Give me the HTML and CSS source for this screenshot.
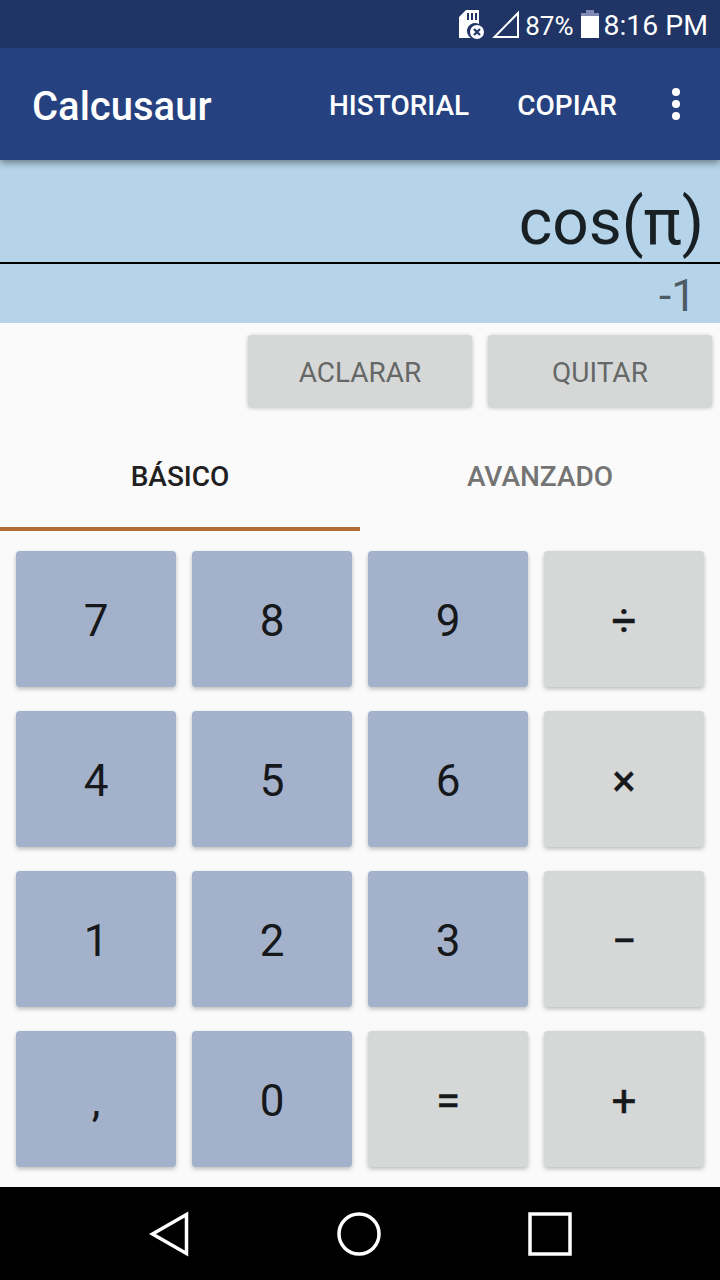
FILE: index.html
```html
<!DOCTYPE html>
<html lang="es">
<head>
    <meta charset="UTF-8">
    <meta name="viewport" content="width=device-width, initial-scale=1.0">
    <title>Calcusaur</title>
    <link rel="stylesheet" href="styles.css">
</head>
<body>
    <div class="status-bar">
        <svg class="sd-icon" width="26" height="30" viewBox="0 0 26 30">
            <path fill="#fff" d="M7 0H20V14A8 8 0 0 0 12 28H0V7Z"/>
            <path fill="none" stroke="#203565" stroke-width="2" d="M9 3V10M13 3V10M17 3V10"/>
            <circle cx="18" cy="22" r="7" fill="#fff"/>
            <path fill="none" stroke="#203565" stroke-width="2.2" d="M15 19L21 25M21 19L15 25"/>
        </svg>
        <svg class="signal-icon" width="28" height="28" viewBox="0 0 28 28">
            <path fill="none" stroke="#fff" stroke-width="2" d="M2.5 27H26V3Z"/>
        </svg>
        <span class="battery-level">87%</span>
        <svg class="battery-icon" width="18" height="28" viewBox="0 0 18 28">
            <path fill="#8189b3" d="M5 0H13V3H18V6H0V3H5Z"/>
            <path fill="#fff" d="M0 6H18V28H0Z"/>
        </svg>
        <span class="clock">8:16 PM</span>
    </div>

    <header>
        <h1>Calcusaur</h1>
        <button class="menu-item">HISTORIAL</button>
        <button class="menu-item">COPIAR</button>
        <button class="overflow" aria-label="Más opciones">
            <svg width="8" height="32" viewBox="0 0 8 32">
                <g fill="#fff">
                    <circle cx="4" cy="4" r="4"/>
                    <circle cx="4" cy="16" r="4"/>
                    <circle cx="4" cy="28" r="4"/>
                </g>
            </svg>
        </button>
    </header>

    <div class="display">
        <div class="expression">cos(π)</div>
        <div class="result">-1</div>
    </div>

    <div class="edit-buttons">
        <button>ACLARAR</button>
        <button>QUITAR</button>
    </div>

    <div class="tabs">
        <button class="tab active">BÁSICO</button>
        <button class="tab">AVANZADO</button>
    </div>

    <div class="keypad">
        <button class="key">7</button>
        <button class="key">8</button>
        <button class="key">9</button>
        <button class="key operator">÷</button>

        <button class="key">4</button>
        <button class="key">5</button>
        <button class="key">6</button>
        <button class="key operator">×</button>

        <button class="key">1</button>
        <button class="key">2</button>
        <button class="key">3</button>
        <button class="key operator">−</button>

        <button class="key">,</button>
        <button class="key">0</button>
        <button class="key operator">=</button>
        <button class="key operator">+</button>
    </div>

    <!-- Android navigation buttons -->
    <nav>
        <svg width="46" height="46" viewBox="0 0 46 46">
            <path d="M7.5 23L41.5 3.5V42.5Z"/>
        </svg>
        <svg width="46" height="46" viewBox="0 0 46 46">
            <circle cx="23" cy="23" r="20"/>
        </svg>
        <svg width="46" height="46" viewBox="0 0 46 46">
            <rect x="3" y="3" width="40" height="40"/>
        </svg>
    </nav>
</body>
</html>
```

FILE: styles.css
```css
* {
    box-sizing: border-box;
}

body {
    display: flex;
    flex-direction: column;
    height: 1280px;
    margin: 0;
    font-family: Roboto, sans-serif;
    background-color: #fafafa;
    color: #1d1f1f;
    overflow: hidden;
}

button {
    padding: 0;
    border: none;
    background: none;
    font-family: inherit;
    color: inherit;
    cursor: pointer;
}

svg {
    display: block;
    flex: none;
}

.status-bar {
    display: flex;
    align-items: center;
    justify-content: flex-end;
    height: 48px;
    padding-right: 12px;
    background-color: #203565;
    color: white;
    z-index: 2;
}

.sd-icon {
    margin: 1px 7px 0 0;
}

.signal-icon {
    margin-right: 5px;
}

.battery-level {
    padding-top: 3px;
    font-size: 26px;
    line-height: 50px;
}

.battery-icon {
    margin: 0 5px 0 7px;
}

.clock {
    padding-top: 4px;
    font-size: 28.4px;
    line-height: 50px;
}

header {
    display: flex;
    align-items: center;
    height: 112px;
    padding: 0 40px 0 32px;
    background-color: #25417f;
    color: white;
    box-shadow: 0 3px 7px rgba(0, 0, 0, 0.4);
    z-index: 1;
}

h1 {
    flex: 1;
    margin: 4px 0 0;
    font-size: 40px;
    font-weight: 500;
}

.menu-item {
    margin-top: 2px;
    margin-right: 48px;
    font-size: 28px;
    font-weight: 500;
}

.overflow {
    margin-left: 7px;
}

.display {
    height: 163px;
    background-color: #b5d4e9;
    text-align: right;
}

.expression {
    height: 104px;
    padding: 25px 16px 0 0;
    border-bottom: 2px solid black;
    font-size: 64px;
    line-height: 75px;
    color: #182024;
}

.result {
    padding-right: 24px;
    font-size: 44px;
    line-height: 64px;
    color: #4c5a63;
}

.edit-buttons {
    display: flex;
    justify-content: flex-end;
    gap: 16px;
    padding: 12px 8px 14px;
}

.edit-buttons button {
    width: 224px;
    height: 72px;
    padding-top: 2px;
    border-radius: 4px;
    background-color: #d6d8d7;
    box-shadow: 0 1px 4px rgba(0, 0, 0, 0.25);
    font-size: 28px;
    color: #666867;
}

.tabs {
    display: flex;
    height: 110px;
}

.tab {
    flex: 1;
    padding-top: 4px;
    border-bottom: 4px solid transparent;
    font-size: 28px;
    font-weight: 500;
    color: #747474;
}

.tab.active {
    border-color: #b36c36;
    color: #202020;
}

.keypad {
    display: grid;
    grid-template-columns: repeat(4, 1fr);
    grid-auto-rows: 136px;
    gap: 24px 16px;
    padding: 20px 16px;
}

.key {
    padding-top: 4px;
    border-radius: 4px;
    background-color: #a3b2ca;
    box-shadow: 0 2px 4px rgba(0, 0, 0, 0.25);
    font-size: 44px;
    color: #16181b;
}

.operator {
    background-color: #d6d8d7;
    -webkit-text-stroke: 0.4px;
}

nav {
    display: flex;
    align-items: center;
    justify-content: center;
    gap: 145px;
    height: 93px;
    margin-top: auto;
    padding-right: 2px;
    background-color: black;
}

nav svg {
    fill: none;
    stroke: white;
    stroke-width: 3.5;
}
```
